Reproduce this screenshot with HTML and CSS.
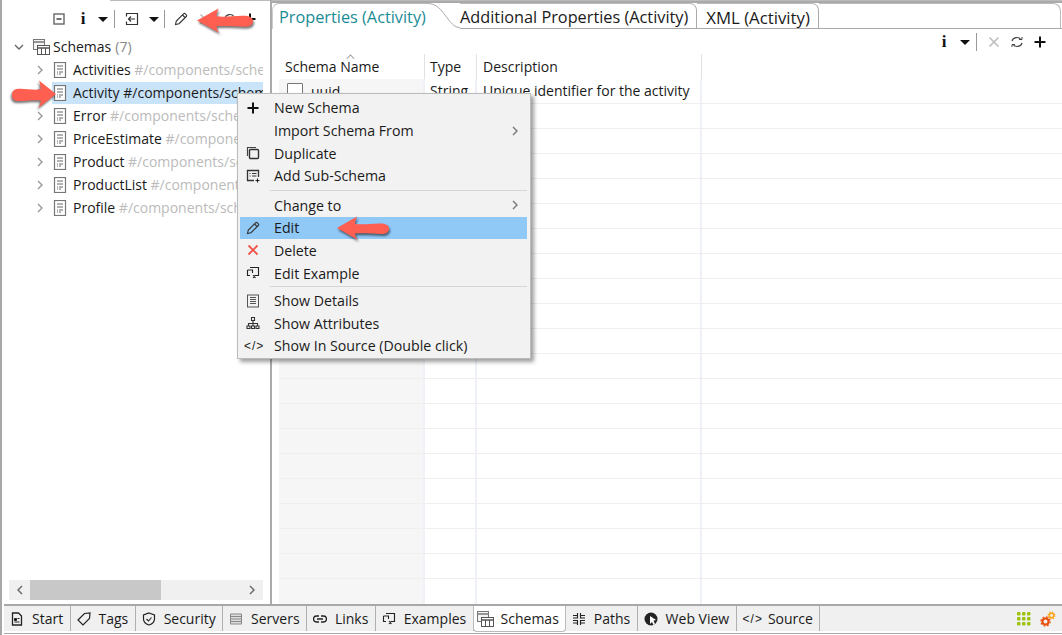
FILE: index.html
```html
<!DOCTYPE html>
<html lang="en">
<head>
<meta charset="utf-8">
<title>Schemas</title>
<link rel="stylesheet" href="styles.css">
</head>
<body>
<svg class="defs" width="0" height="0" aria-hidden="true">
  <defs>
    <symbol id="doc" viewBox="0 0 14 16"><rect x="1.5" y="0.5" width="11" height="15" fill="#fff" stroke="#777" stroke-width="1.2"/><path d="M4 4h6M4 7h6M6 10h4M6 12h2M4 10h1M4 12h1" stroke="#666" fill="none"/></symbol>
    <symbol id="chev" viewBox="0 0 8 10"><path d="M2 1l4 4-4 4" fill="none" stroke="currentColor" stroke-width="1.4"/></symbol>
    <symbol id="pen" viewBox="0 0 14 14"><path d="M1.500 12.500l.8-3.500L9.500 1.800c.6-.6 1.300-.6 1.800 0l1 1c.5.5.5 1.200 0 1.700L5 11.700zM8.500 3l2.500 2.500" fill="none" stroke="#333" stroke-width="1.100"/></symbol>
    <symbol id="schemas" viewBox="0 0 17 16"><rect x="0.5" y="0.5" width="11" height="10" fill="#f4f4f4" stroke="#777"/><path d="M0.500 3h11" stroke="#777" stroke-width="1.500"/><rect x="4.500" y="6.500" width="12" height="9" fill="#fff" stroke="#555"/><path d="M4.500 9h12" stroke="#555" stroke-width="1.500"/><path d="M8.500 9v6M12.500 9v6" stroke="#555" fill="none"/></symbol>
    <symbol id="arrow" viewBox="0 0 52 24" preserveAspectRatio="none"><path d="M0 12L20 .5Q18 5 18 8C28 9 36 7 45 7.500C50 8 52 10 52 13C52 16 49 18 45 18C36 18 28 17 18 17.500Q18 21 21 24Z" fill="#ff5f50"/></symbol>
    <symbol id="example" viewBox="0 0 14 14"><path d="M4 1.500h8.500v8H9M1.500 4h5v3M1.500 4v5.500H4M7 9l2.500 3M9.500 9L7 12" fill="none" stroke="#222" stroke-width="1.100"/></symbol>
  </defs>
</svg>

<div class="app">
  <div class="main">
    <section class="left">
      <div class="toolbar">
        <svg class="ic collapse" viewBox="0 0 14 14"><rect x="2" y="2" width="10" height="10" fill="none" stroke="#666" stroke-width="1.400"/><path d="M4.500 7h5" stroke="#333" stroke-width="1.400"/></svg>
        <span class="info">i</span>
        <span class="caret"></span>
        <span class="vsep"></span>
        <svg class="ic" viewBox="0 0 14 14"><path d="M1.500 4.500V1.500h11v11h-11V9.500M10 7H3.500M6 4.500L3.500 7 6 9.500" fill="none" stroke="#333" stroke-width="1.200"/></svg>
        <span class="caret second-caret"></span>
        <span class="vsep second-sep"></span>
        <svg class="ic"><use href="#pen"/></svg>
        <svg class="ic t-x" viewBox="0 0 14 14"><path d="M2.500 2.500l9 9M11.500 2.500l-9 9" stroke="#bbb" stroke-width="1.500"/></svg>
        <svg class="ic t-r" viewBox="0 0 14 14"><path d="M2 6a5 4.500 0 0 1 9-1.500M12 8a5 4.500 0 0 1-9 1.500" fill="none" stroke="#444" stroke-width="1.200"/></svg>
        <svg class="ic t-p" viewBox="0 0 14 14"><path d="M7 1.500v11M1.500 7h11" stroke="#111" stroke-width="2"/></svg>
      </div>
      <ul class="tree">
        <li class="node root"><svg class="twist open" viewBox="0 0 10 8"><path d="M1 2l4 4 4-4" fill="none" stroke="#666" stroke-width="1.400"/></svg><svg class="nicon wide"><use href="#schemas"/></svg><span>Schemas</span> <span class="count">(7)</span></li>
        <li class="node"><svg class="twist"><use href="#chev"/></svg><svg class="nicon"><use href="#doc"/></svg><span class="lbl">Activities <em>#/components/schemas/Activities</em></span></li>
        <li class="node sel"><svg class="twist"><use href="#chev"/></svg><span class="selband"><svg class="nicon"><use href="#doc"/></svg><span class="lbl">Activity #/components/schemas/Activity</span></span></li>
        <li class="node"><svg class="twist"><use href="#chev"/></svg><svg class="nicon"><use href="#doc"/></svg><span class="lbl">Error <em>#/components/schemas/Error</em></span></li>
        <li class="node"><svg class="twist"><use href="#chev"/></svg><svg class="nicon"><use href="#doc"/></svg><span class="lbl">PriceEstimate <em>#/components/schemas</em></span></li>
        <li class="node"><svg class="twist"><use href="#chev"/></svg><svg class="nicon"><use href="#doc"/></svg><span class="lbl">Product <em>#/components/schemas/Product</em></span></li>
        <li class="node"><svg class="twist"><use href="#chev"/></svg><svg class="nicon"><use href="#doc"/></svg><span class="lbl">ProductList <em>#/components/schemas</em></span></li>
        <li class="node"><svg class="twist"><use href="#chev"/></svg><svg class="nicon"><use href="#doc"/></svg><span class="lbl">Profile <em>#/components/schemas/Profile</em></span></li>
      </ul>
      <div class="hscroll">
        <svg class="sarrow flip"><use href="#chev"/></svg>
        <div class="track"><div class="thumb"></div></div>
        <svg class="sarrow"><use href="#chev"/></svg>
      </div>
    </section>

    <section class="right">
      <div class="tabs">
        <span class="tab active">Properties (Activity)</span>
        <svg class="slant" viewBox="0 0 33 26" preserveAspectRatio="none"><path d="M0 .5C8 .5 12 4 18 12 24 20 27 24.500 33 24.500V26H0Z" fill="#fff"/><path d="M0 .5C8 .5 12 4 18 12 24 20 27 24.500 33 24.500" fill="none" stroke="#aaa"/></svg>
        <span class="tab second">Additional Properties (Activity)</span>
        <span class="tab third">XML (Activity)</span>
        <span class="tabfill"></span>
      </div>
      <div class="rtools">
        <span class="info">i</span>
        <span class="caret"></span>
        <span class="vsep"></span>
        <svg class="ic" viewBox="0 0 14 14"><path d="M2.500 2.500l9 9M11.500 2.500l-9 9" stroke="#bbb" stroke-width="1.500"/></svg>
        <svg class="ic" viewBox="0 0 14 14"><path d="M2 6a5 4.500 0 0 1 9-1.500M12 8a5 4.500 0 0 1-9 1.500" fill="none" stroke="#444" stroke-width="1.200"/><path d="M9 4.500h3V2M5 9.500H2V12" fill="none" stroke="#444"/></svg>
        <svg class="ic" viewBox="0 0 14 14"><path d="M7 1.500v11M1.500 7h11" stroke="#111" stroke-width="2"/></svg>
      </div>
      <div class="table">
        <div class="thead">
          <div class="th c1"><span class="sort"></span>Schema Name</div>
          <div class="th c2">Type</div>
          <div class="th c3">Description</div>
          <div class="th c4"></div>
        </div>
        <div class="row">
          <div class="td c1"><span class="check"></span>uuid</div>
          <div class="td c2">String</div>
          <div class="td c3">Unique identifier for the activity</div>
          <div class="td c4"></div>
        </div>
        <div class="row"><div class="td c1"></div><div class="td c2"></div><div class="td c3"></div><div class="td c4"></div></div>
        <div class="row"><div class="td c1"></div><div class="td c2"></div><div class="td c3"></div><div class="td c4"></div></div>
        <div class="row"><div class="td c1"></div><div class="td c2"></div><div class="td c3"></div><div class="td c4"></div></div>
        <div class="row"><div class="td c1"></div><div class="td c2"></div><div class="td c3"></div><div class="td c4"></div></div>
        <div class="row"><div class="td c1"></div><div class="td c2"></div><div class="td c3"></div><div class="td c4"></div></div>
        <div class="row"><div class="td c1"></div><div class="td c2"></div><div class="td c3"></div><div class="td c4"></div></div>
        <div class="row"><div class="td c1"></div><div class="td c2"></div><div class="td c3"></div><div class="td c4"></div></div>
        <div class="row"><div class="td c1"></div><div class="td c2"></div><div class="td c3"></div><div class="td c4"></div></div>
        <div class="row"><div class="td c1"></div><div class="td c2"></div><div class="td c3"></div><div class="td c4"></div></div>
        <div class="row"><div class="td c1"></div><div class="td c2"></div><div class="td c3"></div><div class="td c4"></div></div>
        <div class="row"><div class="td c1"></div><div class="td c2"></div><div class="td c3"></div><div class="td c4"></div></div>
        <div class="row"><div class="td c1"></div><div class="td c2"></div><div class="td c3"></div><div class="td c4"></div></div>
        <div class="row"><div class="td c1"></div><div class="td c2"></div><div class="td c3"></div><div class="td c4"></div></div>
        <div class="row"><div class="td c1"></div><div class="td c2"></div><div class="td c3"></div><div class="td c4"></div></div>
        <div class="row"><div class="td c1"></div><div class="td c2"></div><div class="td c3"></div><div class="td c4"></div></div>
        <div class="row"><div class="td c1"></div><div class="td c2"></div><div class="td c3"></div><div class="td c4"></div></div>
        <div class="row"><div class="td c1"></div><div class="td c2"></div><div class="td c3"></div><div class="td c4"></div></div>
        <div class="row"><div class="td c1"></div><div class="td c2"></div><div class="td c3"></div><div class="td c4"></div></div>
        <div class="row"><div class="td c1"></div><div class="td c2"></div><div class="td c3"></div><div class="td c4"></div></div>
        <div class="row last"><div class="td c1"></div><div class="td c2"></div><div class="td c3"></div><div class="td c4"></div></div>
      </div>
    </section>
  </div>

  <nav class="bottom">
    <div class="btab"><svg class="bi" viewBox="0 0 14 14"><path d="M2.500 1h6l3 3v9h-9z" fill="none" stroke="#222" stroke-width="1.300"/><path d="M4.500 6.500h2v2h-2zM7.500 6.500h2M4.500 10h5" stroke="#222"/></svg>Start</div>
    <div class="btab"><svg class="bi" viewBox="0 0 14 14"><path d="M1 8l6.500-6.500L13 1l-.5 5.500L6 13z" fill="none" stroke="#222" stroke-width="1.200"/></svg>Tags</div>
    <div class="btab"><svg class="bi" viewBox="0 0 14 14"><path d="M7 1l5.500 2v4c0 3-2.500 5-5.500 6-3-1-5.500-3-5.500-6V3z" fill="none" stroke="#222" stroke-width="1.200"/><path d="M4.500 7l2 2 3-3.500" fill="none" stroke="#222" stroke-width="1.100"/></svg>Security</div>
    <div class="btab"><svg class="bi" viewBox="0 0 14 14"><path d="M1.500 2h11v10h-11zM1.500 4.500h11M1.500 7h11M1.500 9.500h11" fill="#ddd" stroke="#888"/></svg>Servers</div>
    <div class="btab"><svg class="bi" viewBox="0 0 14 14"><path d="M6 4H3.500a3 3 0 0 0 0 6H6M8 4h2.500a3 3 0 0 1 0 6H8M4 7h6" fill="none" stroke="#222" stroke-width="1.300"/></svg>Links</div>
    <div class="btab"><svg class="bi"><use href="#example"/></svg>Examples</div>
    <div class="btab cur"><svg class="bi wide"><use href="#schemas"/></svg>Schemas</div>
    <div class="btab"><svg class="bi" viewBox="0 0 14 14"><path d="M1 3.500h4.500M5.500 1v5H1M8.500 1v5H13M8.500 3.500H13M1 8.500h4.500V13M8.500 13V8.500H13M1 11h4.500M8.500 11H13" fill="none" stroke="#222" stroke-width="1.100"/></svg>Paths</div>
    <div class="btab"><svg class="bi" viewBox="0 0 14 14"><circle cx="7" cy="7" r="6.500" fill="#222"/><path d="M6 4l6 4-2.500.8L11 12l-1.500 1-1.500-3-2 2z" fill="#fff"/></svg>Web View</div>
    <div class="btab"><span class="code">&lt;/&gt;</span>Source</div>
    <div class="status">
      <svg class="grid9" viewBox="0 0 14 14"><g fill="#9cc40c"><rect x="0" y="0" width="3.500" height="3.500" rx="1"/><rect x="5" y="0" width="3.500" height="3.500" rx="1"/><rect x="10" y="0" width="3.500" height="3.500" rx="1"/><rect x="0" y="5" width="3.500" height="3.500" rx="1"/><rect x="5" y="5" width="3.500" height="3.500" rx="1"/><rect x="10" y="5" width="3.500" height="3.500" rx="1"/><rect x="0" y="10" width="3.500" height="3.500" rx="1"/><rect x="5" y="10" width="3.500" height="3.500" rx="1"/><rect x="10" y="10" width="3.500" height="3.500" rx="1"/></g></svg>
      <svg class="gears" viewBox="0 0 16 16"><circle cx="5.500" cy="10.500" r="3" fill="none" stroke="#e8500a" stroke-width="2"/><circle cx="5.500" cy="10.500" r="4.500" fill="none" stroke="#e8500a" stroke-width="1.400" stroke-dasharray="1.800 1.730"/><circle cx="11.500" cy="4.500" r="2.200" fill="none" stroke="#f9a51a" stroke-width="1.600"/><circle cx="11.500" cy="4.500" r="3.400" fill="none" stroke="#f9a51a" stroke-width="1.200" stroke-dasharray="1.400 1.270"/></svg>
    </div>
  </nav>
</div>

<div class="menu">
  <div class="mi"><svg class="mico" viewBox="0 0 14 14"><path d="M7 1.500v11M1.500 7h11" stroke="#111" stroke-width="2"/></svg><span>New Schema</span></div>
  <div class="mi"><span class="mico"></span><span>Import Schema From</span><svg class="sub"><use href="#chev"/></svg></div>
  <div class="mi"><svg class="mico" viewBox="0 0 14 14"><path d="M1.500 10V1.500H10" fill="none" stroke="#444" stroke-width="1.200"/><rect x="3.500" y="3.500" width="9" height="9" rx="1" fill="none" stroke="#333" stroke-width="1.400"/></svg><span>Duplicate</span></div>
  <div class="mi"><svg class="mico" viewBox="0 0 14 14"><path d="M12.500 8V1.500h-11v10H8" fill="none" stroke="#333" stroke-width="1.300"/><path d="M3.500 4.500h1M6 4.500h4.500M3.500 7h1M6 7h4.500" stroke="#333"/><path d="M11.500 9.500v4M9.500 11.500h4" stroke="#222" stroke-width="1.100"/></svg><span>Add Sub-Schema</span></div>
  <div class="msep"></div>
  <div class="mi"><span class="mico"></span><span>Change to</span><svg class="sub"><use href="#chev"/></svg></div>
  <div class="mi hot"><svg class="mico"><use href="#pen"/></svg><span>Edit</span></div>
  <div class="mi"><svg class="mico" viewBox="0 0 14 14"><path d="M2.500 2.500l9 9M11.500 2.500l-9 9" stroke="#f0544a" stroke-width="1.800"/></svg><span>Delete</span></div>
  <div class="mi"><svg class="mico"><use href="#example"/></svg><span>Edit Example</span></div>
  <div class="msep tight"></div>
  <div class="mi"><svg class="mico" viewBox="0 0 14 14"><rect x="1.500" y="1" width="11" height="12" fill="none" stroke="#555"/><path d="M4 3.500h6M4 5.500h6M4 7.500h6M4 9.500h6" stroke="#555"/></svg><span>Show Details</span></div>
  <div class="mi"><svg class="mico" viewBox="0 0 14 14"><path d="M5.500 1.500h3v3h-3zM1 10h3v2.500H1zM5.500 10h3v2.500h-3zM10 10h3v2.500h-3zM7 4.500V10M2.500 10V7.500h9V10" fill="none" stroke="#333" stroke-width="1.100"/></svg><span>Show Attributes</span></div>
  <div class="mi"><span class="mico code">&lt;/&gt;</span><span>Show In Source (Double click)</span></div>
</div>

<svg class="mark m1"><use href="#arrow"/></svg>
<svg class="mark m2"><use href="#arrow"/></svg>
<svg class="mark m3"><use href="#arrow"/></svg>
</body>
</html>
```

FILE: styles.css
```css
* { box-sizing: border-box; }
html, body { margin: 0; padding: 0; height: 100%; overflow: hidden; background: #fff; }
body { font-family: "Open Sans", "Noto Sans", sans-serif; font-size: 14px; color: #1a1a1a; }
.defs { position: absolute; }
.app { height: 635px; display: flex; flex-direction: column; border-left: 2px solid #a8a8a8; }
.main { height: 604px; flex: none; display: flex; min-height: 0; background: linear-gradient(#bbb, #bbb) no-repeat 108px 0 / 100% 1px; }

.left { width: 270px; display: flex; flex-direction: column; border-right: 2px solid #aaa; }
.toolbar { height: 35px; padding: 3px 0 0 50px; display: flex; align-items: center; flex: none; }
.ic { width: 14px; height: 14px; flex: none; }
.info { font: bold 17px "Liberation Serif", serif; color: #111; width: 8px; text-align: center; line-height: 14px; flex: none; }
.caret { width: 0; height: 0; border: 5px solid transparent; border-top: 5px solid #111; border-bottom: 0; margin: 1px 6px 0 11px; flex: none; }
.vsep { width: 1px; height: 18px; background: #999; margin: 0 10px 0 0; flex: none; }
.toolbar .collapse { margin-right: 13px; }
.toolbar .second-caret { margin-left: 10px; margin-right: 5px; }
.toolbar .second-sep { margin-right: 9px; }
.toolbar .t-x { margin-left: 10px; }
.toolbar .t-r { margin-left: 11px; }
.toolbar .t-p { margin-left: 6px; }

.tree { list-style: none; margin: 0; padding: 0; flex: 1; overflow: hidden; }
.node { height: 23px; display: flex; align-items: center; white-space: nowrap; overflow: hidden; padding-left: 34px; width: 261px; }
.node.root { padding-left: 12px; }
.twist { width: 8px; height: 10px; flex: none; margin-right: 9px; color: #999; }
.twist.open { width: 10px; height: 8px; margin-right: 9px; }
.nicon { width: 14px; height: 16px; flex: none; margin-right: 6px; }
.nicon.wide { width: 17px; margin-right: 3px; }
.count { color: #888; margin-left: 4px; }
.lbl em { font-style: normal; color: #bbb; }
.selband { display: flex; align-items: center; flex: 1; height: 22px; background: #c9e3f9; margin-left: -1px; padding-left: 1px; overflow: hidden; }
.hscroll { height: 20px; margin: 0 6px 4px 7px; background: #f0f0f0; display: flex; align-items: center; width: 254px; flex: none; color: #666; }
.sarrow { width: 8px; height: 10px; flex: none; margin: 0 7px; }
.sarrow.flip { transform: scaleX(-1); }
.track { flex: 1; height: 20px; margin-left: -1px; }
.thumb { width: 131px; height: 20px; background: #c8c8c8; }

.right { flex: 1; display: flex; flex-direction: column; min-width: 0; }
.tabs { height: 28px; margin-top: 1px; display: flex; align-items: stretch; border-top: 2px solid #aaa; border-bottom: 1px solid #aaa; flex: none; }
.tab { padding: 0; font-size: 16.300px; line-height: 27px; background: #fff; white-space: nowrap; flex: none; border-top: 1px solid #bbb; }
.tab.active { color: #1a8c96; width: 155px; padding-left: 6px; margin-bottom: -1px; border-left: 1px solid #ccc; border-radius: 7px 0 0 0; }
.slant { width: 33px; height: 26px; flex: none; margin-bottom: -1px; }
.tab.second { padding-right: 8px; border-right: 1px solid #aaa; border-top-right-radius: 7px; }
.tab.third { padding: 0 8px 0 9px; font-size: 16.800px; border-right: 1px solid #aaa; border-top-right-radius: 7px; }
.tabfill { flex: 1; border-top: 1px solid #bbb; border-right: 1px solid #bbb; border-top-right-radius: 8px; margin-right: 1px; }
.rtools { height: 25px; display: flex; align-items: center; justify-content: flex-end; padding-right: 15px; flex: none; }
.rtools .caret { margin: 1px 6px 0 12px; }
.rtools .ic { margin-left: 9px; }
.rtools .vsep + .ic { margin-left: 0; }

.table { margin-left: 7px; display: flex; flex-direction: column; flex: 1; overflow: hidden; }
.thead { height: 25px; display: flex; flex: none; }
.row { height: 25px; display: flex; flex: none; border-bottom: 1px solid #efefef; }
.row.last { border-bottom: 0; }
.th { height: 100%; padding-left: 5px; padding-top: 3px; line-height: 20px; border-right: 1px solid #e2e2e2; position: relative; }
.td { height: 100%; padding-left: 5px; line-height: 23px; border-right: 2px solid #eef2f8; white-space: nowrap; overflow: hidden; }
.c1 { width: 146px; }
.th.c1 { padding-left: 6px; }
.td.c1 { background: #f6f6f6; padding-left: 8px; display: flex; align-items: center; }
.c2 { width: 52px; }
.c3 { width: 225px; }
.th.c3, .td.c3 { padding-left: 6px; }
.c4 { flex: 1; border-right: 0; }
.th.c4, .td.c4 { border-right: 0; }
.sort { position: absolute; left: 68px; top: 1px; width: 7px; height: 7px; border-left: 1px solid #888; border-top: 1px solid #888; transform: rotate(45deg) scale(.8); }
.check { width: 16px; height: 16px; border: 1px solid #777; background: #fff; border-radius: 1px; margin-right: 8px; flex: none; }

.bottom { height: 30px; margin-left: 2px; display: flex; align-items: flex-start; background: linear-gradient(#f0f0f0 25px, #fff 25px); border-top: 2px solid #a8a8a8; border-bottom: 1px solid #a8a8a8; flex: none; }
.btab { display: flex; align-items: center; padding: 0 6.350px 0 6px; border-right: 1px solid #b0b0b0; white-space: nowrap; height: 25px; flex: none; }
.btab.cur { background: #fff; border: 1px solid #bbb; border-top: 0; border-radius: 0 0 4px 4px; margin-left: -1px; padding: 0 6px 0 3px; height: 26px; }
.bi { width: 14px; height: 14px; margin-right: 8px; flex: none; }
.bi.wide { width: 17px; height: 16px; margin-right: 7px; }
.code { font: 12px "Liberation Sans", sans-serif; letter-spacing: 1px; margin-right: 5px; color: #222; }
.status { margin-left: auto; display: flex; align-items: center; gap: 9px; padding-right: 6px; height: 25px; }
.grid9 { width: 14px; height: 14px; }
.gears { width: 16px; height: 16px; }

.menu { position: absolute; left: 237px; top: 93px; width: 294px; height: 266px; background: #f2f2f2; border: 1px solid #bbb; padding: 3px 3px 3px 2px; box-shadow: 3px 3px 4px rgba(0,0,0,.38); font-size: 14.200px; }
.mi { height: 22.600px; display: flex; align-items: center; position: relative; color: #1a1a1a; top: -.4px; }
.mi.hot { background: #90c8f6; }
.mico { width: 14px; height: 14px; flex: none; margin: 0 14px 0 6px; }
.mico.code { margin: 0 14px 0 4px; width: 16px; font-size: 12px; line-height: 14px; letter-spacing: 1px; white-space: nowrap; }
.sub { position: absolute; right: 8px; width: 8px; height: 10px; color: #777; }
.msep { height: 1px; background: #d6d6d6; margin: 3px 0 3px 30px; width: 257px; }
.msep.tight { margin-top: 1px; }

.mark { position: absolute; filter: drop-shadow(1px 2px 1px rgba(0,0,0,.55)); }
.m1 { left: 197px; top: 8px; width: 56px; height: 25px; }
.m2 { left: 337px; top: 216px; width: 52px; height: 24px; }
.m3 { left: 12px; top: 80px; width: 44px; height: 28px; transform: scaleX(-1); }
```
